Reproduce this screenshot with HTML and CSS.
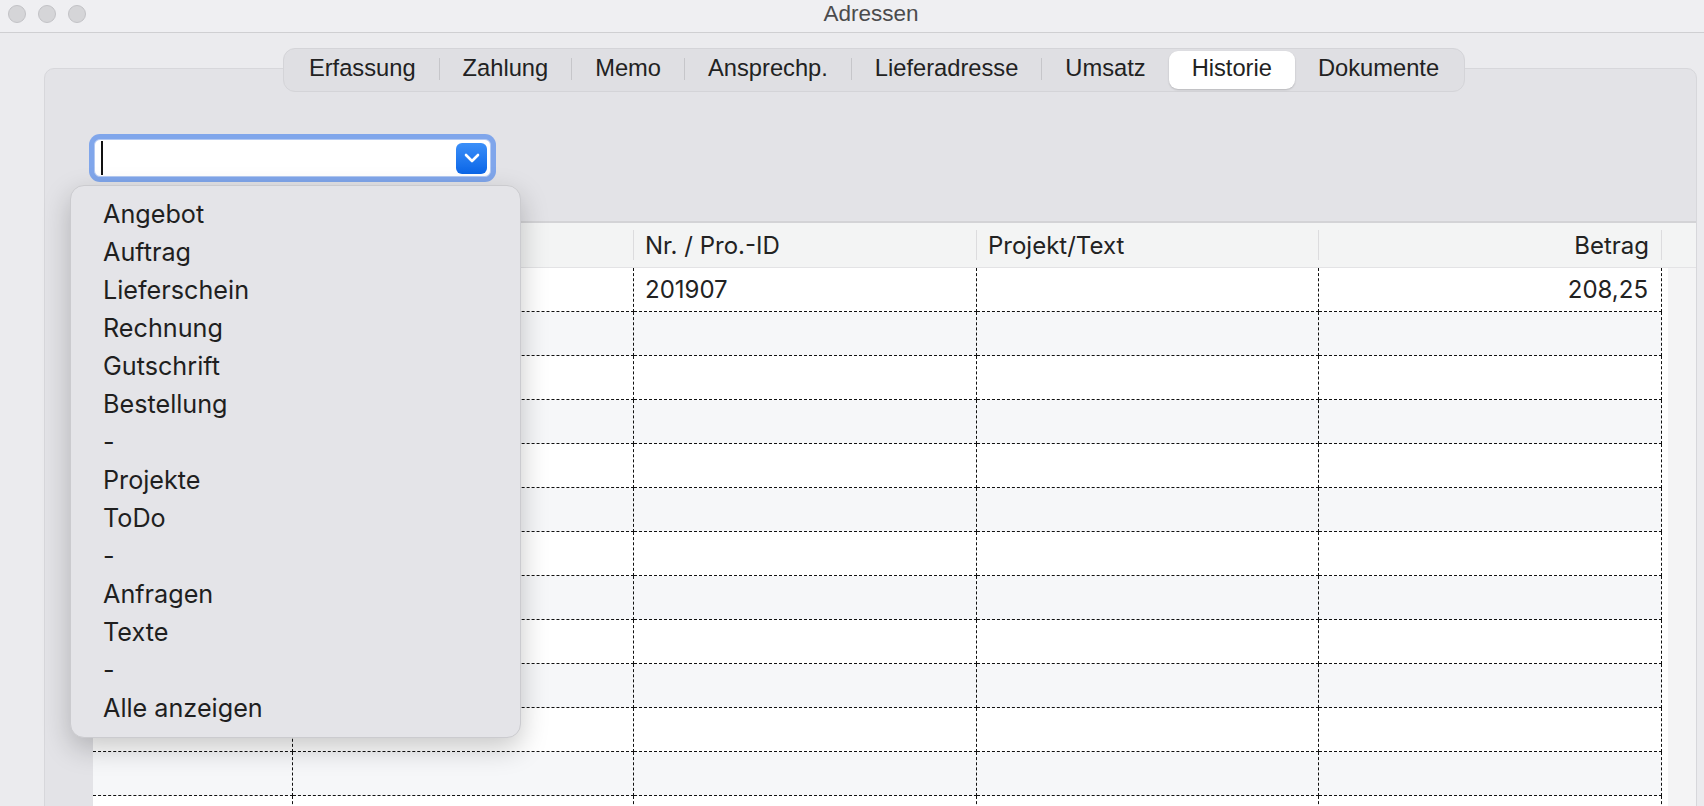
FILE: index.html
```html
<!DOCTYPE html>
<html>
	<head>
		<meta charset="UTF-8">
		<title>Adressen</title>
		<link rel="stylesheet" href="styles.css">
	</head>
	<body>
		<div class="window">
			<div class="titlebar">
				<div class="lights"><span></span><span></span><span></span></div>
				<div class="title">Adressen</div>
				<div></div>
			</div>
			<div class="content">
				<div class="tabs-row">
					<div class="tabs">
						<div class="tab">Erfassung</div>
						<div class="sep"></div>
						<div class="tab">Zahlung</div>
						<div class="sep"></div>
						<div class="tab">Memo</div>
						<div class="sep"></div>
						<div class="tab">Ansprechp.</div>
						<div class="sep"></div>
						<div class="tab">Lieferadresse</div>
						<div class="sep"></div>
						<div class="tab">Umsatz</div>
						<div class="tab active">Historie</div>
						<div class="tab">Dokumente</div>
					</div>
				</div>
				<div class="panel">
					<div class="combo">
						<span class="caret"></span>
						<span class="combo-btn">
							<svg width="16" height="10" viewBox="0 0 16 10"><path d="M2 2l6 6 6-6" fill="none" stroke="#fff" stroke-width="2.6" stroke-linecap="round" stroke-linejoin="round"/></svg>
						</span>
					</div>
					<table class="grid">
						<colgroup>
							<col style="width:200px"><col style="width:341px"><col style="width:343px"><col style="width:342px"><col style="width:343px"><col>
						</colgroup>
						<thead>
							<tr><th></th><th></th><th>Nr. / Pro.-ID</th><th>Projekt/Text</th><th class="num">Betrag</th><th class="gutter"></th></tr>
						</thead>
						<tbody>
							<tr><td></td><td></td><td>201907</td><td></td><td class="num">208,25</td><td class="gutter"></td></tr>
							<tr><td></td><td></td><td></td><td></td><td></td><td class="gutter"></td></tr>
							<tr><td></td><td></td><td></td><td></td><td></td><td class="gutter"></td></tr>
							<tr><td></td><td></td><td></td><td></td><td></td><td class="gutter"></td></tr>
							<tr><td></td><td></td><td></td><td></td><td></td><td class="gutter"></td></tr>
							<tr><td></td><td></td><td></td><td></td><td></td><td class="gutter"></td></tr>
							<tr><td></td><td></td><td></td><td></td><td></td><td class="gutter"></td></tr>
							<tr><td></td><td></td><td></td><td></td><td></td><td class="gutter"></td></tr>
							<tr><td></td><td></td><td></td><td></td><td></td><td class="gutter"></td></tr>
							<tr><td></td><td></td><td></td><td></td><td></td><td class="gutter"></td></tr>
							<tr><td></td><td></td><td></td><td></td><td></td><td class="gutter"></td></tr>
							<tr><td></td><td></td><td></td><td></td><td></td><td class="gutter"></td></tr>
							<tr><td></td><td></td><td></td><td></td><td></td><td class="gutter"></td></tr>
						</tbody>
					</table>
				</div>
			</div>
			<ul class="menu">
				<li>Angebot</li>
				<li>Auftrag</li>
				<li>Lieferschein</li>
				<li>Rechnung</li>
				<li>Gutschrift</li>
				<li>Bestellung</li>
				<li>-</li>
				<li>Projekte</li>
				<li>ToDo</li>
				<li>-</li>
				<li>Anfragen</li>
				<li>Texte</li>
				<li>-</li>
				<li>Alle anzeigen</li>
			</ul>
		</div>
	</body>
</html>
```

FILE: styles.css
```css
*{margin:0;padding:0;box-sizing:border-box;}
ul{list-style:none;}
html,body{
	height:100%;
}
body{
	overflow:hidden;
	background:#ebebee;
	font-family:Inter,"Noto Sans",sans-serif;
	color:#222;
}
.window{
	width:1740px;
	height:806px;
	position:relative;
	background:#ebebee;
}
.titlebar{
	height:33px;
	display:grid;
	grid-template-columns:1fr auto 1fr;
	align-items:start;
	background:#efeff2;
	border-bottom:1px solid #cfcfd2;
}
.lights{
	display:flex;
	gap:12px;
	padding:5px 0 0 8px;
}
.lights span{
	width:18px;
	height:18px;
	border-radius:50%;
	background:#d5d5d8;
	border:1px solid #c2c2c6;
}
.title{
	font-family:"Liberation Sans",Arial,sans-serif;
	font-size:22.5px;
	line-height:28px;
	color:#4b4b4d;
	padding-left:2px;
}
.content{
	padding:15px 43px 0 44px;
}
.tabs-row{
	display:flex;
	justify-content:center;
	padding-left:7px;
	position:relative;
	z-index:1;
}
.tabs{
	display:flex;
	align-items:center;
	height:44px;
	padding:2px;
	background:#dfdfe3;
	border:1px solid #d4d4d8;
	border-radius:12px;
	font-family:"Liberation Sans",Arial,sans-serif;
	font-size:23.7px;
}
.tab{
	padding:0 23px 3px;
	line-height:35px;
	height:38px;
	color:#222;
}
.tab.active{
	background:#fff;
	border-radius:9px;
	box-shadow:0 1px 2px rgba(0,0,0,.18);
}
.sep{
	width:1px;
	height:22px;
	margin-bottom:2px;
	background:#c6c6ca;
}
.panel{
	margin-top:-24px;
	height:760px;
	background:#e3e3e7;
	border:1px solid #d7d7db;
	border-radius:10px;
	padding:70px 0 0 48px;
}
.combo{
	width:397px;
	height:38px;
	margin-left:1px;
	display:flex;
	align-items:center;
	justify-content:space-between;
	padding:0 3px 0 6px;
	background:#fff;
	border-radius:6px;
	border:1px solid #b3c9f2;
	box-shadow:0 0 0 5px #80a6eb;
}
.caret{
	width:2px;
	height:34px;
	background:#111;
}
.combo-btn{
	width:31px;
	height:31px;
	border-radius:6px;
	background:linear-gradient(#3b8ff8,#0b66e8);
	display:flex;
	align-items:center;
	justify-content:center;
}
.grid{
	margin-top:44px;
	width:1603px;
	table-layout:fixed;
	border-collapse:separate;
	border-spacing:0;
	border-top:2px solid #d3d3d6;
	font-size:24px;
	background:#fff;
}
.grid th{
	height:45px;
	background:#f3f4f4 linear-gradient(#dcdcde,#dcdcde) no-repeat right center/1px 30px;
	border-bottom:1px solid #e3e3e5;
	font-weight:normal;
	text-align:left;
	padding:0 13px 0 11px;
	color:#222;
}
.grid td{
	height:44px;
	border-right:1px dashed #111;
	border-bottom:1px dashed #111;
	padding:0 13px 0 11px;
	color:#222;
}
.grid tbody tr:nth-child(even) td{
	background:#f6f7f9;
}
.grid .num{
	text-align:right;
}
.grid th.gutter{
	background:#f3f4f4;
}
.grid td.gutter,
.grid tbody tr:nth-child(even) td.gutter{
	border:0;
	background:linear-gradient(to right,#fff 6px,#f4f4f5 6px,#f4f4f5 34px,#fff 34px);
}
.menu{
	position:absolute;
	left:70px;
	top:185px;
	width:451px;
	padding:9px 0 10px 32px;
	background:#e4e4e8;
	border:1px solid #cbcbcf;
	border-radius:14px;
	box-shadow:0 10px 28px rgba(0,0,0,.22);
	font-size:25.2px;
	color:#1f1f1f;
}
.menu li{
	line-height:38px;
	height:38px;
}
```
